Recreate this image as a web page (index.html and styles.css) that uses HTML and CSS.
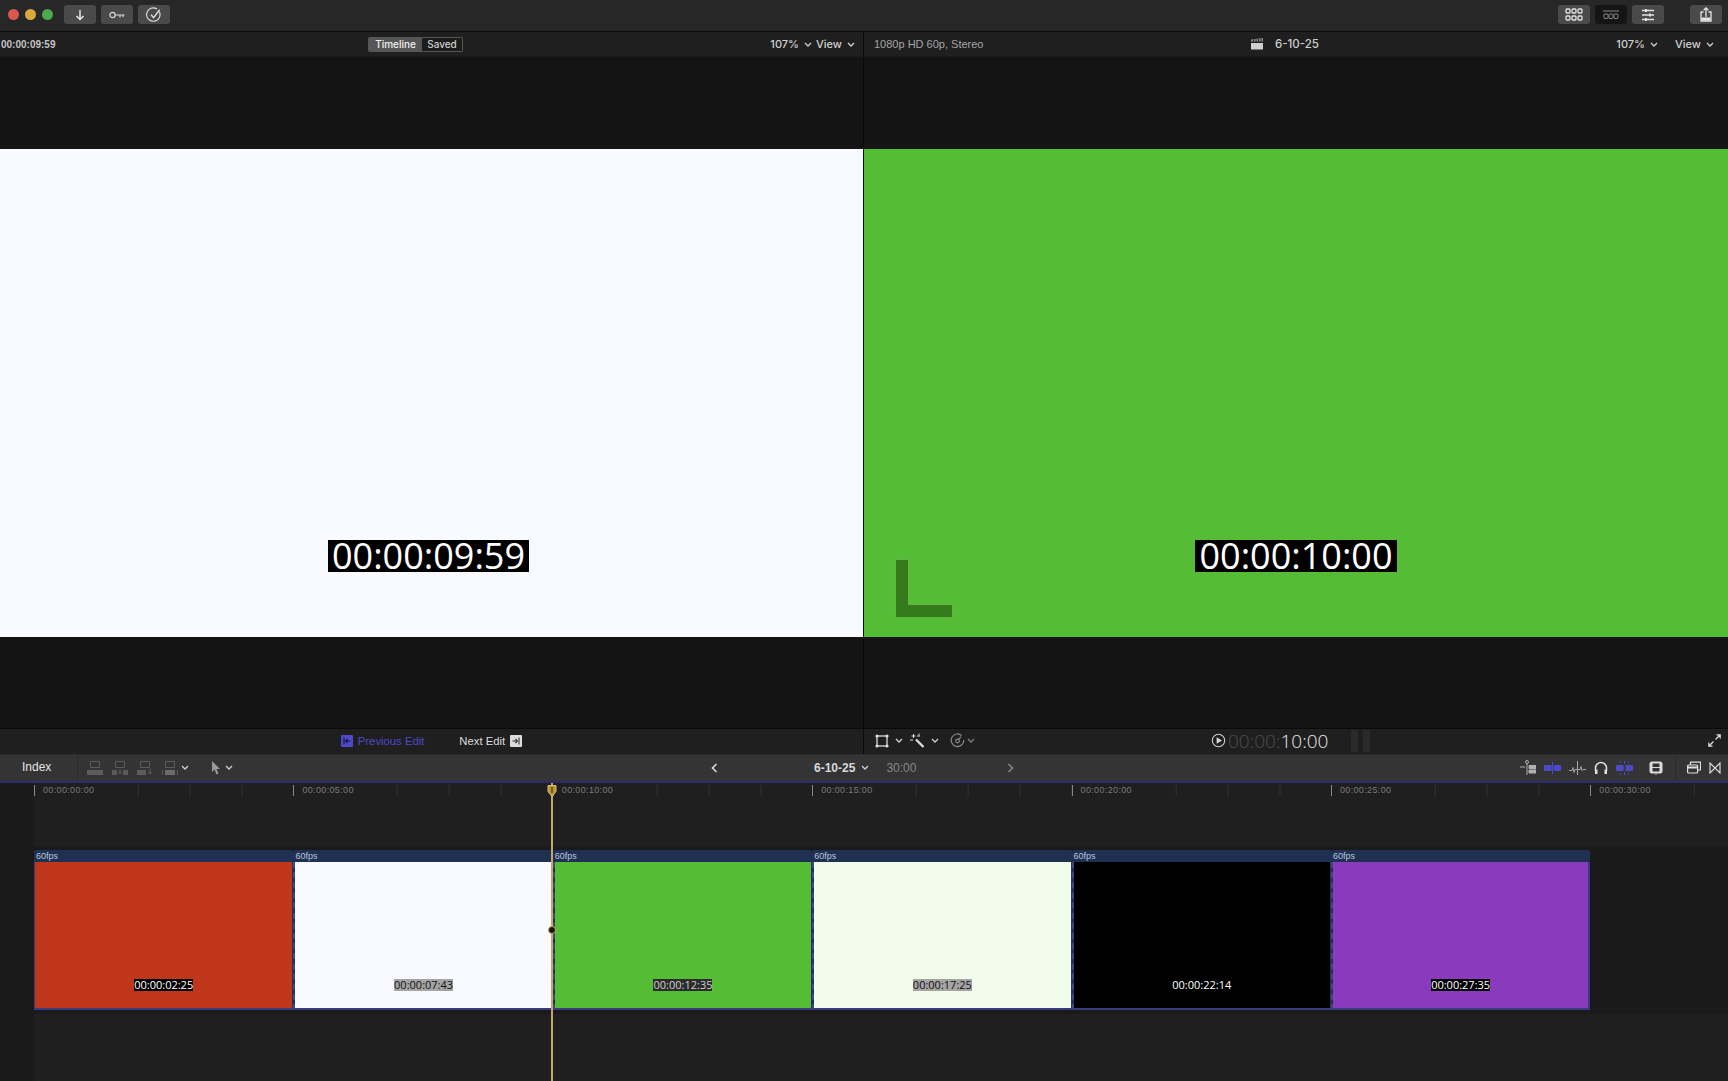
FILE: index.html
```html
<!DOCTYPE html>
<html lang="en">

<head>
    <meta charset="UTF-8">
    <title>6-10-25</title>
    <link rel="stylesheet" href="styles.css">
</head>

<body>
    <div class="titlebar">
        <div class="lights"><i class="red"></i><i class="yellow"></i><i class="green"></i></div>
        <div class="btn">
            <svg width="14" height="14" viewBox="0 0 14 14" fill="none" stroke="#e4e4e4" stroke-width="1.5"><path d="M7 2v9.5M3.5 8 7 11.5 10.500 8"/></svg>
        </div>
        <div class="btn">
            <svg width="16" height="10" viewBox="0 0 16 10" fill="none" stroke="#d8d8d8" stroke-width="1.2"><circle cx="3.5" cy="5" r="2.6"/><path d="M6 5h9.5M11 5v2.4M14 5v2"/></svg>
        </div>
        <div class="btn">
            <svg width="16" height="16" viewBox="0 0 16 16" fill="none" stroke="#e0e0e0" stroke-width="1.1"><path d="M13.4 4.8A6.7 6.7 0 1 1 11 2"/><path d="M5 7.8 7.6 10.6 13.6 2.8" stroke-width="1.4"/></svg>
        </div>
        <div class="spacer"></div>
        <div class="btn">
            <svg width="18" height="13" viewBox="0 0 18 13" fill="none" stroke="#e2e2e2" stroke-width="1.3"><rect x="1" y="1" width="4" height="4" rx="1"/><rect x="7" y="1" width="4" height="4" rx="1"/><rect x="13" y="1" width="4" height="4" rx="1"/><rect x="1" y="8" width="4" height="4" rx="1"/><rect x="7" y="8" width="4" height="4" rx="1"/><rect x="13" y="8" width="4" height="4" rx="1"/></svg>
        </div>
        <div class="btn dark">
            <svg width="16" height="10" viewBox="0 0 16 10" fill="none" stroke="#8a8a8a" stroke-width="1"><path d="M0 1h16"/><rect x="1" y="4" width="4" height="4.5" rx="1"/><rect x="6" y="4" width="4" height="4.5" rx="1"/><rect x="11" y="4" width="4" height="4.5" rx="1"/></svg>
        </div>
        <div class="btn">
            <svg width="14" height="14" viewBox="0 0 14 14" fill="none" stroke="#e2e2e2" stroke-width="1.3"><path d="M1 2.5h12M1 7h12M1 11.5h12"/><path d="M5 1v3M9 5.5v3M5 10v3" stroke-width="2"/></svg>
        </div>
        <div class="btn share">
            <svg width="12" height="15" viewBox="0 0 12 15" fill="none" stroke="#e4e4e4" stroke-width="1.3"><path d="M3.5 5H1v9h10V5H8.5"/><path d="M6 10V1M3.6 3.2 6 .9l2.4 2.3"/><path d="M1.5 10.5h9v3h-9z" fill="#e4e4e4" stroke="none"/></svg>
        </div>
    </div>

    <div class="viewers">
        <div class="viewer left">
            <div class="head">
                <span class="head-code">00:00:09:59</span>
                <div class="seg"><span class="seg-on">Timeline</span><span class="seg-off">Saved</span></div>
                <div class="head-menus">
                    <span class="menu">107%<svg class="chev" viewBox="0 0 8 5"><path d="M1 1l3 3 3-3"/></svg></span>
                    <span class="menu">View<svg class="chev" viewBox="0 0 8 5"><path d="M1 1l3 3 3-3"/></svg></span>
                </div>
            </div>
            <div class="stage">
                <div class="picture white"><span class="burn">00:00:09:59</span></div>
            </div>
            <div class="foot foot-edit">
                <svg width="12" height="12" viewBox="0 0 12 12"><rect width="12" height="12" rx="1" fill="#4f48c8"/><path d="M3 2.5v7M9.5 6H4.6M6.6 4 4.6 6l2 2" fill="none" stroke="#16163a" stroke-width="1.1"/></svg>
                <span class="prev">Previous Edit</span>
                <span class="next">Next Edit</span>
                <svg width="12" height="12" viewBox="0 0 12 12"><rect width="12" height="12" rx="1" fill="#dcdcdc"/><path d="M9 2.5v7M2.5 6h4.9M5.4 4l2 2-2 2" fill="none" stroke="#333" stroke-width="1.1"/></svg>
            </div>
        </div>
        <div class="viewer right">
            <div class="head">
                <span class="head-format">1080p HD 60p, Stereo</span>
                <div class="head-title">
                    <svg width="12" height="12" viewBox="0 0 12 12"><path d="M0 5h12v6.500H0z" fill="#d0d0d0"/><path d="M0 1.500 12 0v3.600H0z" fill="#8c8c8c"/><path d="M2.500 1.200v2.400M5 .9v2.700M7.500 .6v3M10 .3v3.300" stroke="#2a2a2a"/></svg>
                    <span>6-10-25</span>
                </div>
                <div class="head-menus">
                    <span class="menu">107%<svg class="chev" viewBox="0 0 8 5"><path d="M1 1l3 3 3-3"/></svg></span>
                    <span class="menu">View<svg class="chev" viewBox="0 0 8 5"><path d="M1 1l3 3 3-3"/></svg></span>
                </div>
            </div>
            <div class="stage">
                <div class="picture lime">
                    <span class="burn">00:00:10:00</span>
                    <svg class="corner" width="58" height="59" viewBox="0 0 58 59"><path d="M.5.5h13v45h44v13H.5z" fill="#357a1c" stroke="#62b646"/></svg>
                </div>
            </div>
            <div class="foot foot-tools">
                <svg width="14" height="14" viewBox="0 0 14 14" fill="none" stroke="#dcdcdc"><rect x="2" y="2" width="10" height="10" stroke-width="1.3"/><g fill="#dcdcdc" stroke="none"><circle cx="2" cy="2" r="1.6"/><circle cx="12" cy="2" r="1.6"/><circle cx="2" cy="12" r="1.6"/><circle cx="12" cy="12" r="1.6"/></g></svg>
                <svg class="chev" viewBox="0 0 8 5"><path d="M1 1l3 3 3-3"/></svg>
                <svg width="16" height="16" viewBox="0 0 16 16" fill="none" stroke="#dcdcdc"><path d="M7 6.500 14.500 14" stroke-width="2.400"/><path d="M4.500 1v4M2.500 3h4M1 7h3M8 3h3M10 .5v2" stroke-width="1"/></svg>
                <svg class="chev" viewBox="0 0 8 5"><path d="M1 1l3 3 3-3"/></svg>
                <svg class="tool-gap" width="15" height="15" viewBox="0 0 15 15" fill="none" stroke="#8a8a8a" stroke-width="1.2"><path d="M11.800 2.600A6.300 6.300 0 1 0 13.800 7"/><circle cx="7.500" cy="8" r="1.800"/><path d="M8.600 6.600 11 3.600"/></svg>
                <svg class="chev dim" viewBox="0 0 8 5"><path d="M1 1l3 3 3-3"/></svg>
                <div class="transport">
                    <svg width="15" height="15" viewBox="0 0 15 15"><circle cx="7.500" cy="7.500" r="6.200" fill="none" stroke="#cfcfcf" stroke-width="1.100"/><path d="M5.600 4.300 11 7.500l-5.400 3.200z" fill="#d8d8d8"/></svg>
                    <span class="clock"><span class="clock-dim">00:00:</span>10:00</span>
                    <span class="meter"></span><span class="meter"></span>
                </div>
                <svg class="expand" width="13" height="13" viewBox="0 0 13 13" fill="none" stroke="#e0e0e0" stroke-width="1.200"><path d="M7.500 5.500 12 1M8.500 .8H12.200V4.500M5.500 7.500 1 12M.8 8.500V12.200H4.500"/></svg>
            </div>
        </div>
    </div>

    <div class="toolbar">
        <span class="index">Index</span>
        <div class="edit-tools">
            <svg width="16" height="14" viewBox="0 0 16 14" fill="none" stroke="#5c5c5c"><path d="M3.500 .5h9v6h-9z"/><path d="M0 9h16v5H0z" fill="#5c5c5c" stroke="none"/></svg>
            <svg width="16" height="14" viewBox="0 0 16 14" fill="none" stroke="#5c5c5c"><path d="M3.500 .5h9v6h-9z"/><path d="M0 9h5v5H0zM11 9h5v5h-5z" fill="#5c5c5c" stroke="none"/><path d="M8 8v5M6 11l2 2 2-2"/></svg>
            <svg width="16" height="14" viewBox="0 0 16 14" fill="none" stroke="#5c5c5c"><path d="M3.500 .5h9v6h-9z"/><path d="M0 9h9v5H0z" fill="#5c5c5c" stroke="none"/><path d="M13 8v5M11 11l2 2 2-2"/></svg>
            <svg width="16" height="14" viewBox="0 0 16 14" fill="none" stroke="#5c5c5c"><path d="M3.500 .5h9v6h-9z"/><path d="M3 9h10v5H3z" fill="#6c6c6c" stroke="none"/><path d="M.5 9v5M15.500 9v5"/></svg>
            <svg class="chev" viewBox="0 0 8 5"><path d="M1 1l3 3 3-3"/></svg>
            <svg class="arrow" width="11" height="14" viewBox="0 0 11 14"><path d="M1 0v11l2.600-2.400L5.500 13.500l2-.9-2-4.600H9z" fill="#9a9a9a"/></svg>
            <svg class="chev" viewBox="0 0 8 5"><path d="M1 1l3 3 3-3"/></svg>
        </div>
        <div class="project">
            <svg class="nav" width="7" height="10" viewBox="0 0 7 10" fill="none" stroke="#dcdcdc" stroke-width="1.600"><path d="M5.500 1 1.500 5l4 4"/></svg>
            <span class="project-name">6-10-25</span>
            <svg class="chev" viewBox="0 0 8 5"><path d="M1 1l3 3 3-3"/></svg>
            <span class="project-len">30:00</span>
            <svg class="nav nav-next" width="7" height="10" viewBox="0 0 7 10" fill="none" stroke="#858585" stroke-width="1.600"><path d="M1.500 1l4 4-4 4"/></svg>
        </div>
        <div class="view-tools">
            <svg width="16" height="15" viewBox="0 0 16 15" fill="none" stroke="#b0b0b0"><circle cx="7" cy="2" r="1.500"/><path d="M7 3.500V15"/><path d="M0 7h5M9 5.500h7v3H9zM9 10h7v3H9z" fill="#b0b0b0"/></svg>
            <svg width="17" height="12" viewBox="0 0 17 12"><path d="M0 3h7.500v6H0zM9.500 3H17v6H9.500z" fill="#4f48c8"/><path d="M8.500 0v12" stroke="#4f48c8"/></svg>
            <svg width="17" height="14" viewBox="0 0 17 14" fill="none" stroke="#a8a8a8"><path d="M8.500 0v14M0 9.500h3l1-3 1 5 1-3h2M9 8.500h2l1-3 1 4 1-1h3"/></svg>
            <svg width="14" height="14" viewBox="0 0 14 14" fill="none" stroke="#e0e0e0" stroke-width="1.500"><path d="M1.500 10V7a5.500 5.500 0 0 1 11 0v3"/><path d="M1 8.500h2.500v4.500H1zM10.500 8.500H13v4.500h-2.500z" fill="#e0e0e0" stroke="none"/></svg>
            <svg width="17" height="14" viewBox="0 0 17 14"><path d="M0 4h7.500v6H0zM9.500 4H17v6H9.500z" fill="#4f48c8"/><path d="M8.500 0v3M8.500 11v3M4 0l1 2M13 0l-1 2M4 14l1-2M13 14l-1-2" stroke="#4f48c8"/></svg>
            <svg class="clip-view" width="14" height="14" viewBox="0 0 14 14"><rect x=".5" y=".5" width="13" height="12" rx="2.500" fill="#dcdcdc"/><rect x="3.500" y="2.500" width="7" height="3.500" fill="#343434"/><rect x="3.500" y="7" width="7" height="3.500" fill="#343434"/><path d="M6 13h2l-1 1z" fill="#dcdcdc"/></svg>
            <div class="view-sep"></div>
            <svg width="14" height="13" viewBox="0 0 14 13" fill="none" stroke="#e0e0e0" stroke-width="1.200"><rect x=".6" y="4" width="10" height="8" rx="1"/><path d="M3.500 4V1.200h10V9H10.600"/><path d="M1 6.500h9" stroke-width="2"/></svg>
            <svg width="12" height="12" viewBox="0 0 12 12" fill="none" stroke="#e0e0e0" stroke-width="1.100"><path d="M1 1v10l10-10v10z"/></svg>
        </div>
    </div>

    <div class="timeline">
        <div class="gutter"></div>
        <div class="tracks">
            <div class="ruler">
                <div class="mark"><span>00:00:00:00</span></div>
                <div class="mark"><span>00:00:05:00</span></div>
                <div class="mark"><span>00:00:10:00</span></div>
                <div class="mark"><span>00:00:15:00</span></div>
                <div class="mark"><span>00:00:20:00</span></div>
                <div class="mark"><span>00:00:25:00</span></div>
                <div class="mark"><span>00:00:30:00</span></div>
            </div>
            <div class="empty-lane"></div>
            <div class="lane">
                <div class="clip">
                    <div class="clip-head">60fps</div>
                    <div class="clip-body red-clip"><span class="code">00:00:02:25</span></div>
                </div>
                <div class="clip">
                    <div class="clip-head">60fps</div>
                    <div class="clip-body white-clip"><span class="code soft">00:00:07:43</span></div>
                </div>
                <div class="clip">
                    <div class="clip-head">60fps</div>
                    <div class="clip-body green-clip"><span class="code mid">00:00:12:35</span></div>
                </div>
                <div class="clip">
                    <div class="clip-head">60fps</div>
                    <div class="clip-body mint-clip"><span class="code soft">00:00:17:25</span></div>
                </div>
                <div class="clip">
                    <div class="clip-head">60fps</div>
                    <div class="clip-body black-clip"><span class="code">00:00:22:14</span></div>
                </div>
                <div class="clip">
                    <div class="clip-head">60fps</div>
                    <div class="clip-body purple-clip"><span class="code">00:00:27:35</span></div>
                </div>
            </div>
        </div>
        <div class="playhead">
            <svg class="playhead-cap" width="10" height="12" viewBox="0 0 10 12"><path d="M1 .5h8v6L5 11.500 1 6.500z" fill="#b8962e" stroke="#dcc070"/><path d="M5 2v6" stroke="#5a4a12" stroke-width="1.500"/></svg>
            <i class="playhead-dot"></i>
        </div>
    </div>
</body>

</html>
```
FILE: styles.css
```css
* {
    box-sizing: border-box;
}

html,
body {
    margin: 0;
    padding: 0;
}

body {
    width: 1728px;
    height: 1081px;
    overflow: hidden;
    background: #141414;
    color: #d8d8d8;
    font-family: "Liberation Sans", Arial, sans-serif;
    font-size: 11px;
}

svg {
    display: block;
    flex: none;
}

.chev {
    width: 8px;
    height: 5px;
    fill: none;
    stroke: #d0d0d0;
    stroke-width: 1.3;
}

.chev.dim {
    stroke: #808080;
    margin-left: -4px;
}

/* top bar */
.titlebar {
    height: 32px;
    display: flex;
    align-items: center;
    padding: 0 6px 2px 8px;
    gap: 5px;
    background: #272727;
    border-bottom: 1px solid #0c0c0c;
}

.lights {
    display: flex;
    gap: 6px;
    margin-right: 6px;
}

.lights i {
    width: 11px;
    height: 11px;
    border-radius: 50%;
}

.lights .red {
    background: #d9574e;
}

.lights .yellow {
    background: #d8aa3c;
}

.lights .green {
    background: #4da94e;
}

.spacer {
    flex: 1;
}

.btn {
    width: 32px;
    height: 19px;
    border-radius: 3px;
    background: #4a4a4a;
    display: flex;
    align-items: center;
    justify-content: center;
}

.btn.dark {
    background: #151515;
}

.btn.share {
    margin-left: 21px;
}

/* viewers */
.viewers {
    height: 722px;
    display: flex;
}

.viewer {
    display: flex;
    flex-direction: column;
}

.viewer.left {
    width: 864px;
    border-right: 1px solid #0a0a0a;
}

.viewer.right {
    width: 864px;
}

.head {
    height: 25px;
    flex: none;
    display: flex;
    align-items: center;
    background: #1f1f1f;
    border-bottom: 1px solid #191919;
    font-size: 11px;
}

.head-code {
    padding-left: 1px;
    font-size: 10px;
    font-weight: bold;
    color: #c4c4c4;
    width: 368px;
}

.seg {
    display: flex;
    height: 15px;
    width: 95px;
    padding: 1px;
    border-radius: 2px;
    background: #565656;
    font-family: Inter, "Liberation Sans", sans-serif;
    font-weight: 500;
    font-size: 10px;
    line-height: 13px;
}

.seg-on {
    width: 53px;
    text-align: center;
    color: #f0f0f0;
}

.seg-off {
    flex: 1;
    text-align: center;
    background: #1c1c1c;
    color: #cfcfcf;
}

.head-menus {
    margin-left: auto;
    display: flex;
    gap: 4px;
    padding-right: 8px;
}

.menu {
    display: flex;
    align-items: center;
    gap: 5px;
    color: #cfcfcf;
    font-family: Inter, "Liberation Sans", sans-serif;
    font-weight: 500;
    font-size: 11px;
}

.right .head-menus {
    gap: 17px;
    padding-right: 14px;
}

.head-format {
    width: 387px;
    padding-left: 10px;
    color: #a6a6a6;
}

.head-title {
    display: flex;
    align-items: center;
    gap: 12px;
    font-family: Inter, "Liberation Sans", sans-serif;
    font-weight: 500;
    font-size: 11.5px;
    color: #cdcdcd;
}

.stage {
    flex: 1;
    display: flex;
    align-items: center;
    padding-top: 1px;
    background: #141414;
}

.picture {
    width: 100%;
    height: 488px;
    position: relative;
    display: flex;
    align-items: flex-end;
    justify-content: center;
    padding-bottom: 65px;
}

.picture.white {
    background: #f9faff;
    padding-right: 6px;
}

.picture.lime {
    background: #55bd35;
}

.burn {
    background: #000;
    color: #fff;
    font-family: "Open Sans", sans-serif;
    font-size: 36px;
    line-height: 32px;
    padding: 0 4px;
}

.corner {
    position: absolute;
    left: 31px;
    bottom: 19px;
}

.foot {
    height: 26px;
    flex: none;
    display: flex;
    align-items: center;
    padding-bottom: 2px;
    background: #1f1f1f;
    border-top: 1px solid #0a0a0a;
}

.foot-edit {
    justify-content: center;
    gap: 5px;
    font-size: 11.3px;
}

.prev {
    color: #4f48c8;
    margin-right: 30px;
}

.next {
    color: #dcdcdc;
}

.foot-tools {
    padding-left: 11px;
    gap: 6px;
}

.tool-gap {
    margin-left: 5px;
}

.transport {
    display: flex;
    align-items: center;
    gap: 2px;
    margin-left: 230px;
}

.clock {
    font-family: "Open Sans", sans-serif;
    font-weight: 300;
    font-size: 19px;
    line-height: 24px;
    color: #e6e6e6;
    margin-right: 21px;
}

.clock-dim {
    color: #4c4c4c;
}

.meter {
    width: 7px;
    height: 22px;
    background: #2a2a2a;
    margin-right: 3px;
}

.expand {
    margin-left: auto;
    margin-right: 7px;
}

/* timeline toolbar */
.toolbar {
    height: 27px;
    display: flex;
    align-items: center;
    padding-bottom: 1px;
    background: #343434;
    border-top: 1px solid #2c2c2c;
}

.index {
    width: 78px;
    height: 100%;
    padding-left: 22px;
    font-size: 12px;
    line-height: 25px;
    color: #e4e4e4;
    border-right: 1px solid #2b2b2b;
}

.edit-tools {
    width: 633px;
    display: flex;
    align-items: center;
    gap: 9px;
    padding-left: 9px;
}

.edit-tools .chev {
    margin-left: -6px;
}

.edit-tools .arrow {
    margin-left: 13px;
}

.project {
    display: flex;
    align-items: center;
    width: 320px;
}

.project-name {
    margin-left: 96px;
    font-size: 12px;
    font-weight: bold;
    color: #d8d8d8;
}

.project .chev {
    margin-left: 6px;
}

.project-len {
    margin-left: 17px;
    color: #858585;
    font-size: 12px;
}

.nav-next {
    margin-left: 91px;
}

.view-tools {
    flex: 1;
    display: flex;
    align-items: center;
    justify-content: flex-end;
    height: 100%;
    gap: 8px;
    padding-right: 7px;
}

.clip-view {
    margin-left: 8px;
}

.view-sep {
    width: 1px;
    height: 100%;
    background: #2b2b2b;
    margin: 0 3px 0 4px;
}

/* timeline */
.timeline {
    height: 300px;
    display: flex;
    position: relative;
    background: #1f1f1f;
    border-top: 2px solid #2f2c6e;
}

.gutter {
    width: 34px;
    flex: none;
    background: #1a1a1a;
}

.tracks {
    width: 1694px;
    flex: none;
    display: flex;
    flex-direction: column;
    overflow: hidden;
}

.ruler {
    height: 22px;
    flex: none;
    display: flex;
    background: #1f1f1f;
}

.mark {
    width: 259.4px;
    flex: none;
    height: 11px;
    margin-top: 2px;
    background-image: linear-gradient(90deg, #333 1px, transparent 1px);
    background-size: 51.88px 100%;
}

.mark span {
    display: block;
    width: 103px;
    height: 11px;
    padding-left: 8px;
    background: #1f1f1f;
    border-left: 1px solid #8a8a8a;
    font-size: 9px;
    line-height: 11px;
    letter-spacing: 0.35px;
    color: #7a7a7a;
}

.empty-lane {
    height: 41px;
    flex: none;
    background: #1f1f1f;
}

.lane {
    height: 168px;
    flex: none;
    display: flex;
    background: #1a1a1a;
    padding-top: 4px;
}

.clip {
    width: 259.4px;
    height: 160px;
    flex: none;
    display: flex;
    flex-direction: column;
    border-radius: 2px;
    background: #1f3052;
}

.clip-head {
    height: 12px;
    flex: none;
    padding-left: 2px;
    font-size: 9px;
    line-height: 12px;
    color: #b8c4dc;
}

.clip-body {
    flex: 1;
    display: flex;
    align-items: flex-end;
    justify-content: center;
    padding-bottom: 17px;
    background-clip: padding-box;
    border: 1px solid #26335e;
    border-top: 0;
    border-left: 2px dashed #3a4a80;
    border-bottom: 2px solid #3a3a80;
}

.clip:first-child .clip-body {
    border-left: 1px solid #3a3a80;
}

.clip:last-child .clip-body {
    border-right: 2px solid #3a3a80;
}

.red-clip {
    background-color: #c0361a;
}

.white-clip {
    background-color: #f9faff;
}

.green-clip {
    background-color: #55bd35;
}

.mint-clip {
    background-color: #f2fcea;
}

.black-clip {
    background-color: #000;
}

.purple-clip {
    background-color: #8a3bbd;
}

.code {
    background: #000;
    color: #fff;
    font-family: "Open Sans", sans-serif;
    font-size: 11px;
    line-height: 12px;
    padding: 0;
}

.code.soft {
    background: #a4a4a4;
    color: #111;
}

.code.mid {
    background: #2c2c2c;
    color: #cfcfcf;
}

.playhead {
    position: absolute;
    left: 551px;
    top: 0;
    bottom: 0;
    width: 2px;
    background: #c4a665;
}

.playhead-cap {
    position: absolute;
    left: -4px;
    top: 2px;
}

.playhead-dot {
    position: absolute;
    left: -3px;
    top: 143px;
    width: 8px;
    height: 8px;
    border-radius: 50%;
    background: #1a1406;
    border: 1px solid #c4a665;
}
```
